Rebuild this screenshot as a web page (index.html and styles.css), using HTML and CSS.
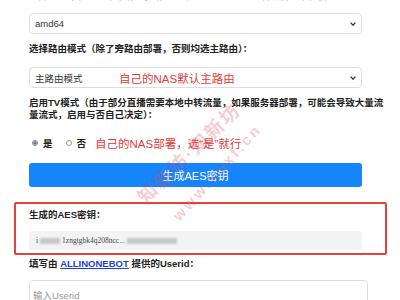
FILE: index.html
```html
<!DOCTYPE html>
<html>
<head>
  <meta charset="utf-8">
  <title>AES密钥生成</title>
  <link rel="stylesheet" href="styles.css">
</head>
<body>
  <div class="page">
    <p class="label first">选择CPU架构（如果不清楚，请通过命令 uname -m 查看设备的架构信息）：</p>
    <div class="select">
      <span>amd64</span>
      <svg class="chev" width="6" height="4" viewBox="0 0 6 4"><polyline points="0.6,0.6 3,3.2 5.4,0.6" fill="none" stroke="#333" stroke-width="1.3"/></svg>
    </div>

    <p class="label">选择路由模式（除了旁路由部署，否则均选主路由）：</p>
    <div class="select">
      <span>主路由模式</span>
      <span class="note in-select">自己的NAS默认主路由</span>
      <svg class="chev" width="6" height="4" viewBox="0 0 6 4"><polyline points="0.6,0.6 3,3.2 5.4,0.6" fill="none" stroke="#333" stroke-width="1.3"/></svg>
    </div>

    <p class="label">启用TV模式（由于部分直播需要本地中转流量，如果服务器部署，可能会导致大量流<br>量流式，启用与否自己决定）：</p>
    <div class="radios">
      <span class="radio checked"></span><span class="opt">是</span>
      <span class="radio"></span><span class="opt">否</span>
      <span class="note">自己的NAS部署，选“是”就行</span>
    </div>

    <div class="btn">生成AES密钥</div>

    <div class="result">
      <p class="label">生成的AES密钥：</p>
      <div class="keybox">
        <span>i</span><span class="blur w20"></span><span>1zngtgbk4q208ncc...</span><span class="blur w50"></span>
      </div>
    </div>

    <p class="label userid-label">填写由 <a href="#">ALLINONEBOT</a> 提供的Userid：</p>
    <div class="input">输入Userid</div>
  </div>

  <div class="mark m1">知新坊·知新坊</div>
  <div class="mark m2">www.xuxf.cn</div>
</body>
</html>
```

FILE: styles.css
```css
body {
  margin: 0;
  background: #fff;
  font-family: "Liberation Sans", "Noto Sans CJK SC", sans-serif;
  color: #222;
  overflow: hidden;
  position: relative;
}

.page {
  padding: 0 38px 0 29px;
}

.label {
  font-size: 9.5px;
  font-weight: bold;
  line-height: 12px;
  margin: 0 0 12px;
  white-space: nowrap;
}

.label.first {
  margin-top: -10px;
  margin-bottom: 11px;
}

.select {
  position: relative;
  height: 21px;
  box-sizing: border-box;
  border: 1px solid #dedede;
  border-radius: 4px;
  margin-bottom: 9px;
  padding: 0 5px;
  display: flex;
  align-items: center;
  justify-content: space-between;
  font-size: 9.5px;
  color: #333;
}

.note {
  color: #e53935;
  font-size: 11.5px;
}

.note.in-select {
  position: absolute;
  left: 89px;
  top: 2px;
}

.radios {
  display: flex;
  align-items: center;
  height: 14px;
  margin: 15px 0 13px;
  padding-left: 3px;
  font-size: 9.5px;
  font-weight: bold;
}

.radio {
  width: 6px;
  height: 6px;
  box-sizing: border-box;
  border: 1px solid #999;
  border-radius: 50%;
  margin-right: 5px;
}

.radio.checked {
  border-color: #888;
  background: radial-gradient(circle, #777 0 1.5px, #fff 1.8px);
}

.opt {
  margin-right: 13px;
}

.opt + .radio + .opt {
  margin-right: 9px;
}

.radios .note {
  font-weight: normal;
}

.btn {
  height: 24px;
  background: #1684fb;
  border-radius: 3px;
  color: #fff;
  font-size: 11px;
  display: flex;
  align-items: center;
  justify-content: center;
}

.result {
  position: relative;
  margin-top: 22px;
}

.result::before {
  content: "";
  position: absolute;
  top: -7px;
  left: -15px;
  right: -25px;
  bottom: -5px;
  border: 2px solid #e5403b;
  border-radius: 2px;
}

.result .label {
  margin-bottom: 10px;
}

.keybox {
  height: 19px;
  background: #f3f3f3;
  border-radius: 3px;
  display: flex;
  align-items: center;
  padding-left: 7px;
  font-family: "Liberation Serif", serif;
  font-size: 7.5px;
  color: #444;
}

.blur {
  display: inline-block;
  height: 6px;
  background: #c8c8c8;
  filter: blur(1px);
  margin: 0 2px;
}

.w20 { width: 20px; }
.w50 { width: 50px; }

.userid-label {
  margin-top: 8px;
  margin-bottom: 10px;
}

.userid-label a {
  color: #1d3fd8;
}

.input {
  height: 26px;
  margin-right: -6px;
  box-sizing: border-box;
  border: 1px solid #dedede;
  border-radius: 4px;
  padding: 7px 3px 0;
  font-size: 9.5px;
  color: #999;
}

/* watermark over the screenshot */
.mark {
  position: absolute;
  color: rgba(236, 70, 90, 0.28);
  white-space: nowrap;
  pointer-events: none;
  font-weight: bold;
}

.m1 {
  left: 188px;
  top: 152px;
  font-size: 19px;
  letter-spacing: 2px;
  transform: translate(-50%, -50%) rotate(-44deg);
}

.m2 {
  left: 217px;
  top: 172px;
  font-size: 15px;
  letter-spacing: 3px;
  transform: translate(-50%, -50%) rotate(-48deg);
}
```
